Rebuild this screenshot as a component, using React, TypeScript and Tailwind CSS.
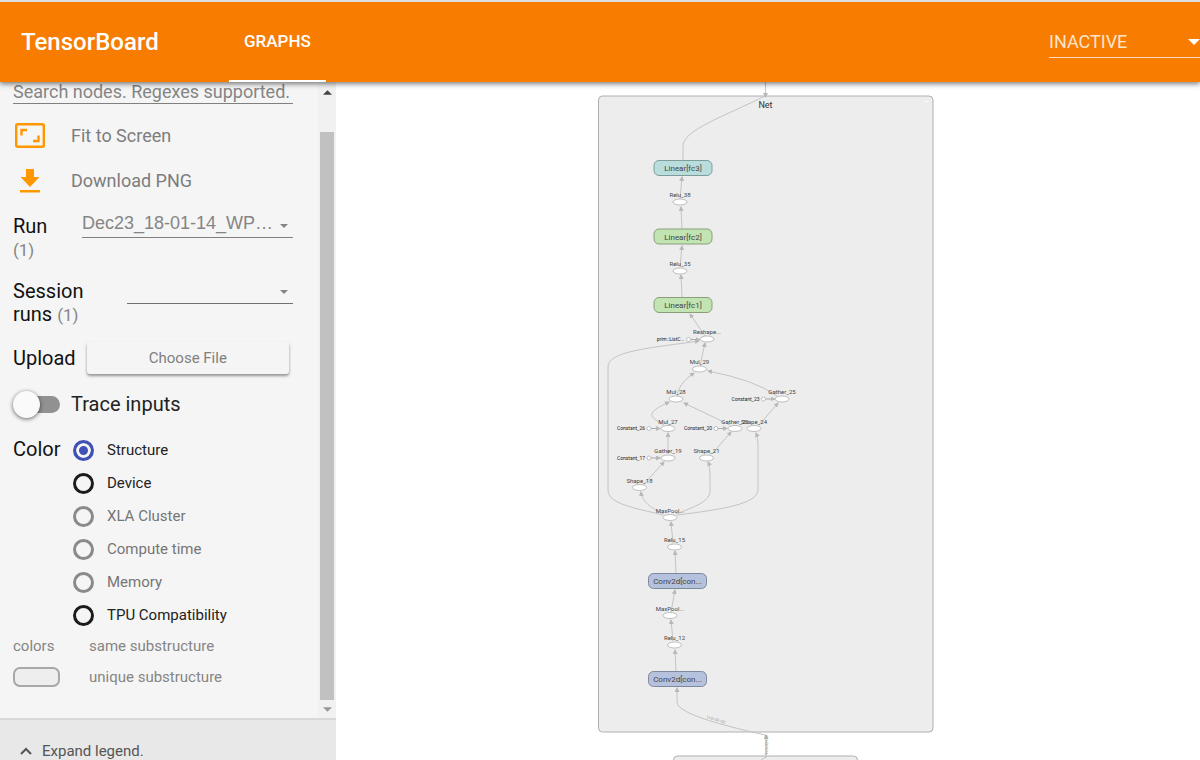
import { useState } from "react";

type OpNode = { label: string; x: number; y: number };
type GroupNode = { label: string; x: number; y: number; fill: string; stroke: string };

const opNodes: OpNode[] = [
  { label: "Relu_38", x: 680, y: 202 },
  { label: "Relu_35", x: 680, y: 271 },
  { label: "Reshape...", x: 707, y: 339 },
  { label: "Mul_29", x: 699.5, y: 369 },
  { label: "Mul_28", x: 676, y: 399 },
  { label: "Gather_25", x: 782, y: 399 },
  { label: "Mul_27", x: 668, y: 428.5 },
  { label: "Gather_22", x: 735, y: 428.5 },
  { label: "Shape_24", x: 754, y: 428.5 },
  { label: "Gather_19", x: 668, y: 458 },
  { label: "Shape_21", x: 706.5, y: 458 },
  { label: "Shape_18", x: 639.5, y: 487.5 },
  { label: "MaxPool...", x: 670, y: 517.5 },
  { label: "Relu_15", x: 674.5, y: 547 },
  { label: "MaxPool...", x: 670, y: 615.5 },
  { label: "Relu_12", x: 674.5, y: 645 },
];

const groupNodes: GroupNode[] = [
  { label: "Linear[fc3]", x: 683, y: 168, fill: "#b9dddc", stroke: "#7f9c9b" },
  { label: "Linear[fc2]", x: 683, y: 236.5, fill: "#c2e3b2", stroke: "#889f7c" },
  { label: "Linear[fc1]", x: 683, y: 305, fill: "#c2e3b2", stroke: "#889f7c" },
  { label: "Conv2d[con...", x: 677.5, y: 581, fill: "#b5c2de", stroke: "#7f889c" },
  { label: "Conv2d[con...", x: 677.5, y: 679, fill: "#b5c2de", stroke: "#7f889c" },
];

// x, y is the centre of the small circle
const constants: OpNode[] = [
  { label: "prim::ListC...", x: 688.5, y: 339.5 },
  { label: "Constant_23", x: 763.5, y: 399 },
  { label: "Constant_26", x: 649, y: 428.5 },
  { label: "Constant_20", x: 716, y: 428.5 },
  { label: "Constant_17", x: 649, y: 458 },
];

const edges = [
  "M680 199 L682 177",
  "M682 229 L681 207",
  "M680 267 L682 246",
  "M682 297 L681 275",
  "M705 336 L690 314",
  "M700 366 L705 343",
  "M677 396 Q678 384 694 373",
  "M777 396 Q755 380 708 371",
  "M664 425 C648 416 646 413 669 402",
  "M730 425 L684 403",
  "M759 425 L778 403",
  "M668 454 L668 433",
  "M712 454 L731 432",
  "M644 484 L664 462",
  "M664 514 C650 508 642 501 641 492",
  "M676 514 C700 505 710 500 710 491 L710 476 Q710 466 708 462",
  "M677 515 C735 508 758 502 758 489 L758 445 Q758 438 756 433",
  "M663 515 C635 508 608 504 608 490 L608 367 C608 351 650 348 699 341",
  "M673 543 L671 522",
  "M676 574 L675 551",
  "M671 612 L675 590",
  "M673 641 L671 620",
  "M676 672 L675 650",
  "M765 735 C735 728 677 715 677 702 L677 688",
];

const colorOptions = [
  { label: "Structure", disabled: false },
  { label: "Device", disabled: false },
  { label: "XLA Cluster", disabled: true },
  { label: "Compute time", disabled: true },
  { label: "Memory", disabled: true },
  { label: "TPU Compatibility", disabled: false },
];

function Caret({ className }: { className: string }) {
  return (
    <svg viewBox="0 0 10 5" className={className} aria-hidden="true">
      <path d="M0 0h10L5 5z" fill="currentColor" />
    </svg>
  );
}

function Header() {
  return (
    <header className="relative z-10 flex h-[82px] shrink-0 border-t-2 border-[#dedede] bg-[#f77c00] text-white shadow-[0_2px_5px_rgba(0,0,0,0.5)]">
      <h1 className="flex w-[229px] items-center pl-[21px] text-[24px] font-medium">TensorBoard</h1>
      <nav className="flex">
        <a href="#graphs" className="flex items-center border-b-2 border-white px-[15px] pt-[2px] text-[17px] font-medium">
          GRAPHS
        </a>
      </nav>
      <div className="relative mt-5 ml-auto h-9 w-[151px] border-b border-[#fddcb8]">
        <select aria-label="Inactive dashboards" className="h-9 w-full appearance-none pt-[2px] text-[18px] text-[#fee5cc] outline-none">
          <option>INACTIVE</option>
        </select>
        <Caret className="pointer-events-none absolute top-[17px] right-0 h-[6px] w-3" />
      </div>
    </header>
  );
}

function Sidebar() {
  const [color, setColor] = useState("Structure");
  const [trace, setTrace] = useState(false);

  return (
    <aside className="flex w-[336px] shrink-0 flex-col bg-[#f5f5f5] text-[20px] text-[#111]">
      <div className="flex min-h-0 flex-1">
        <div className="min-w-0 flex-1 overflow-hidden pr-[25px] pl-[13px]">
          <input
            type="text"
            aria-label="Search nodes"
            placeholder="Search nodes. Regexes supported."
            className="block h-[22px] w-full border-b border-[#808080] pb-[2px] text-[18px] placeholder:text-[#858585]"
          />
          <button className="mt-[9px] flex h-[45px] w-full items-center text-[18px] text-[#7d7d7d]">
            <svg viewBox="0 0 30 25" className="mr-[26px] ml-[2px] h-[25px] w-[30px]" aria-hidden="true">
              <rect x="1.200" y="1.200" width="27.600" height="22.600" rx="1.500" fill="none" stroke="#ff9800" strokeWidth="2.400" />
              <path d="M6.500 12.500V7H12M18 18h5.500v-5.500" fill="none" stroke="#ff9800" strokeWidth="2.400" />
            </svg>
            Fit to Screen
          </button>
          <button className="flex h-[45px] w-full items-center text-[18px] text-[#7d7d7d]">
            <svg viewBox="0 0 20 24" className="mr-[31px] ml-[7px] h-6 w-5" aria-hidden="true">
              <path d="M6 0h8v8h5.500L10 18 .5 8H6zM0 21h20v2.500H0z" fill="#ff9800" />
            </svg>
            Download PNG
          </button>

          <div className="mt-[9px] flex h-[66px] justify-between">
            <label htmlFor="run" className="pt-[2px] leading-6">
              Run
              <span className="block text-[17px] leading-6 text-[#858585]">(1)</span>
            </label>
            <div className="relative h-[26px] w-[211px] border-b border-[#808080]">
              <select
                id="run"
                className="block h-[25px] w-full appearance-none pb-[3px] font-['Liberation_Sans',sans-serif] text-[18px] leading-[22px] text-[#858585] outline-none"
              >
                <option>Dec23_18-01-14_WP…</option>
              </select>
              <Caret className="pointer-events-none absolute top-3 right-[5px] h-1 w-2 text-[#858585]" />
            </div>
          </div>

          <div className="mt-[2px] flex h-[62px] justify-between">
            <label htmlFor="session" className="w-[90px] leading-[23px]">
              Session runs <span className="text-[17px] text-[#858585]">(1)</span>
            </label>
            <div className="relative h-6 w-[166px] border-b border-[#707070]">
              <select id="session" className="block h-[23px] w-full appearance-none text-[18px] outline-none">
                <option></option>
              </select>
              <Caret className="pointer-events-none absolute top-[10px] right-[5px] h-1 w-2 text-[#858585]" />
            </div>
          </div>

          <div className="flex items-center">
            <span>Upload</span>
            <button className="mr-1 ml-[11px] h-8 flex-1 rounded-[3px] bg-[#f5f5f5] text-[15px] text-[#808080] shadow-[0_2px_3px_rgba(0,0,0,0.4)]">
              Choose File
            </button>
          </div>

          <label className="mt-[15px] flex h-[30px] items-center text-[#222]">
            <input
              type="checkbox"
              checked={trace}
              onChange={(e) => setTrace(e.target.checked)}
              className="relative mr-[11px] h-[17px] w-[47px] appearance-none rounded-full bg-[linear-gradient(to_right,transparent_13px,#919191_13px)] before:absolute before:-top-[5px] before:left-0 before:size-[27px] before:rounded-full before:bg-[#fafafa] before:shadow-[0_1px_4px_rgba(0,0,0,0.6)] checked:before:left-5"
            />
            Trace inputs
          </label>

          <fieldset className="mt-[15px] flex">
            <legend className="float-left w-[60px] pt-[1px] leading-7">Color</legend>
            <div>
              {colorOptions.map((o) => (
                <label
                  key={o.label}
                  className={`flex h-[33px] items-center text-[15px] ${o.disabled ? "text-[#757575]" : "text-[#222]"}`}
                >
                  <input
                    type="radio"
                    name="color"
                    disabled={o.disabled}
                    checked={color === o.label}
                    onChange={() => setColor(o.label)}
                    className="mr-[13px] size-[21px] appearance-none rounded-full border-[3px] border-[#1c1c1c] checked:border-[#3f51b5] checked:bg-[#3f51b5] checked:shadow-[inset_0_0_0_3px_#f5f5f5] disabled:border-[#8a8a8a]"
                  />
                  {o.label}
                </label>
              ))}
            </div>
          </fieldset>

          <div className="flex h-7 items-center text-[15px] text-[#858585]">
            <span className="w-[76px]">colors</span>
            same substructure
          </div>
          <div className="mt-[3px] flex h-7 items-center text-[15px] text-[#858585]">
            <span className="mr-[29px] h-5 w-[47px] rounded-[7px] border-2 border-[#a8a8a8] bg-[#eee]" />
            unique substructure
          </div>
        </div>

        <div className="flex w-[18px] flex-col items-center bg-[#f1f1f1]">
          <div className="flex h-[50px] pt-2">
            <Caret className="h-[5px] w-[9px] rotate-180 text-[#444]" />
          </div>
          <div className="w-[14px] flex-1 bg-[#c1c1c1]" />
          <div className="flex h-[18px] items-center">
            <Caret className="h-[5px] w-[9px] text-[#999]" />
          </div>
        </div>
      </div>

      <button className="flex h-[42px] shrink-0 items-end border-t-2 border-[#d8d8d8] bg-[#e8e8e8] pl-5 text-[15px] leading-[18px] text-[#555]">
        <svg viewBox="0 0 12 8" className="mr-[10px] mb-[5px] h-2 w-3" aria-hidden="true">
          <path d="M1 7l5-5 5 5" fill="none" stroke="#555" strokeWidth="2" />
        </svg>
        Expand legend.
      </button>
    </aside>
  );
}

function Graph() {
  return (
    <main className="min-w-0 flex-1 bg-white">
      <svg viewBox="336 82 864 678" preserveAspectRatio="xMidYMin slice" className="h-full w-full" role="img" aria-label="Graph">
        <defs>
          <marker id="arrow" viewBox="0 0 5 5" refX="4" refY="2.5" markerWidth="5" markerHeight="5" markerUnits="userSpaceOnUse" orient="auto">
            <path d="M0 0L5 2.500L0 5z" fill="#b8b8b8" />
          </marker>
        </defs>
        <rect x="598.5" y="96" width="334.500" height="636" rx="4" fill="#ededed" stroke="#b0b0b0" />
        <rect x="673.5" y="756" width="184" height="40" rx="4" fill="#ededed" stroke="#b0b0b0" />
        <path d="M924.500 101.500h4" stroke="#fff" />

        <g fill="none" stroke="#c4c4c4" strokeWidth="1">
          <path d="M683 160 L683 146 C683 130 725 116 765 96" />
          <path d="M765.500 82V97" markerEnd="url(#arrow)" />
          <path d="M766 758V735" strokeWidth="1.500" markerEnd="url(#arrow)" />
          <path d="M761 760l5-3" />
          {edges.map((d) => (
            <path key={d} d={d} markerEnd="url(#arrow)" />
          ))}
        </g>

        {constants.map((n) => (
          <g key={n.label}>
            <path d={`M${n.x + 2} ${n.y}H${n.x + 11}`} stroke="#aaa" markerEnd="url(#arrow)" />
            <circle cx={n.x} cy={n.y} r="2" fill="#fff" stroke="#aaa" strokeWidth="0.700" />
            <text x={n.x - 4} y={n.y + 1.5} textAnchor="end" className="fill-[#222] text-[5px]">
              {n.label}
            </text>
          </g>
        ))}

        {opNodes.map((n) => (
          <g key={`${n.label}-${n.y}`}>
            <ellipse cx={n.x} cy={n.y} rx="7" ry="3" fill="#fff" stroke="#b0b0b0" strokeWidth="0.800" />
            <text x={n.x} y={n.y - 5} textAnchor="middle" className="fill-[#444] text-[6px]">
              {n.label}
            </text>
          </g>
        ))}

        {groupNodes.map((n) => (
          <g key={n.y}>
            <rect x={n.x - 29} y={n.y - 7.5} width="58" height="15" rx="5" fill={n.fill} stroke={n.stroke} />
            <text x={n.x} y={n.y + 3} textAnchor="middle" className="fill-[#444] text-[8px]">
              {n.label}
            </text>
          </g>
        ))}

        <text x="765.5" y="108" textAnchor="middle" className="fill-[#333] text-[9px]">
          Net
        </text>
        <text transform="translate(706 718) rotate(17)" className="fill-[#999] text-[4px]">
          1×3×32×32
        </text>
        <text transform="translate(768 755) rotate(-90)" className="fill-[#999] text-[4px]">
          1×3×32×32
        </text>
      </svg>
    </main>
  );
}

export default function App() {
  return (
    <div className="flex h-screen flex-col overflow-hidden bg-white font-[Roboto,sans-serif]">
      <Header />
      <div className="flex min-h-0 flex-1">
        <Sidebar />
        <Graph />
      </div>
    </div>
  );
}
